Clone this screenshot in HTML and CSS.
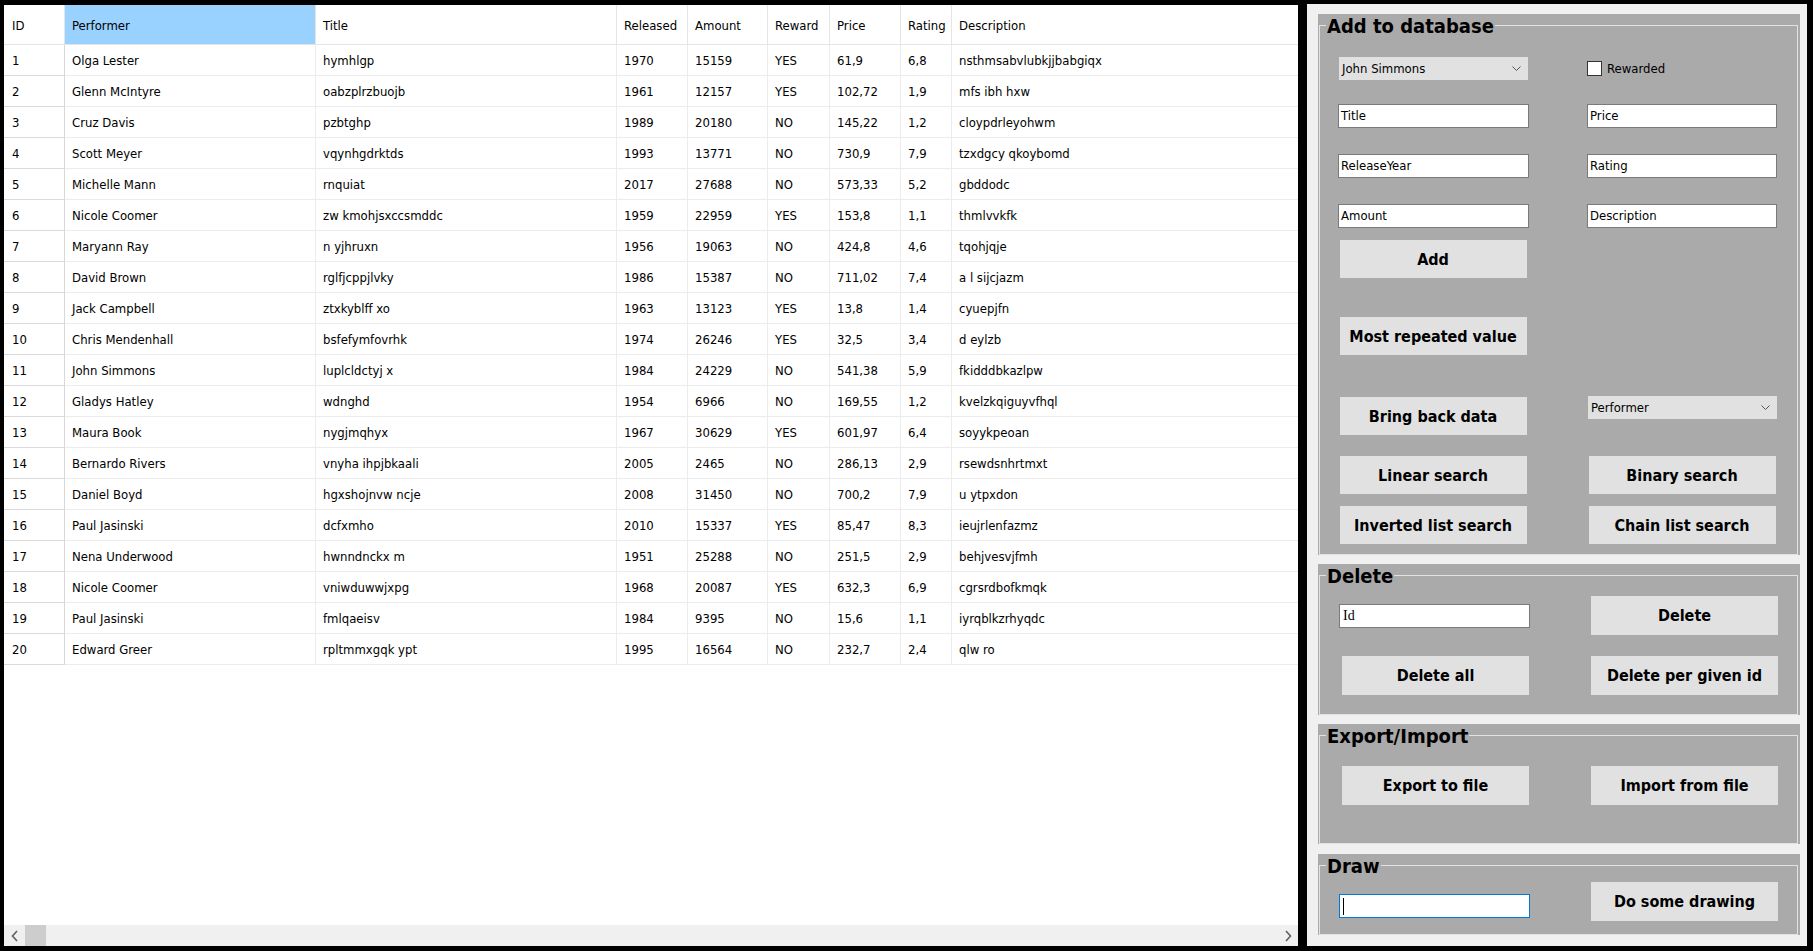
FILE: index.html
```html
<!DOCTYPE html>
<html lang="en">
<head>
<meta charset="utf-8">
<title>Database</title>
<link rel="stylesheet" href="styles.css">
</head>
<body>
<div class="window">
  <div class="table-pane">
    <div class="table-view">
      <table class="grid">
        <colgroup>
          <col class="c-id"><col class="c-perf"><col class="c-title"><col class="c-rel"><col class="c-amt"><col class="c-rew"><col class="c-price"><col class="c-rat"><col class="c-desc">
        </colgroup>
        <thead>
          <tr><th class="vh">ID</th><th class="sel">Performer</th><th>Title</th><th>Released</th><th>Amount</th><th>Reward</th><th>Price</th><th>Rating</th><th class="last">Description</th></tr>
        </thead>
        <tbody>
          <tr><th class="vh">1</th><td>Olga Lester</td><td>hymhlgp</td><td>1970</td><td>15159</td><td>YES</td><td>61,9</td><td>6,8</td><td>nsthmsabvlubkjjbabgiqx</td></tr>
          <tr><th class="vh">2</th><td>Glenn McIntyre</td><td>oabzplrzbuojb</td><td>1961</td><td>12157</td><td>YES</td><td>102,72</td><td>1,9</td><td>mfs ibh hxw</td></tr>
          <tr><th class="vh">3</th><td>Cruz Davis</td><td>pzbtghp</td><td>1989</td><td>20180</td><td>NO</td><td>145,22</td><td>1,2</td><td>cloypdrleyohwm</td></tr>
          <tr><th class="vh">4</th><td>Scott Meyer</td><td>vqynhgdrktds</td><td>1993</td><td>13771</td><td>NO</td><td>730,9</td><td>7,9</td><td>tzxdgcy qkoybomd</td></tr>
          <tr><th class="vh">5</th><td>Michelle Mann</td><td>rnquiat</td><td>2017</td><td>27688</td><td>NO</td><td>573,33</td><td>5,2</td><td>gbddodc</td></tr>
          <tr><th class="vh">6</th><td>Nicole Coomer</td><td>zw kmohjsxccsmddc</td><td>1959</td><td>22959</td><td>YES</td><td>153,8</td><td>1,1</td><td>thmlvvkfk</td></tr>
          <tr><th class="vh">7</th><td>Maryann Ray</td><td>n yjhruxn</td><td>1956</td><td>19063</td><td>NO</td><td>424,8</td><td>4,6</td><td>tqohjqje</td></tr>
          <tr><th class="vh">8</th><td>David Brown</td><td>rglfjcppjlvky</td><td>1986</td><td>15387</td><td>NO</td><td>711,02</td><td>7,4</td><td>a l sijcjazm</td></tr>
          <tr><th class="vh">9</th><td>Jack Campbell</td><td>ztxkyblff xo</td><td>1963</td><td>13123</td><td>YES</td><td>13,8</td><td>1,4</td><td>cyuepjfn</td></tr>
          <tr><th class="vh">10</th><td>Chris Mendenhall</td><td>bsfefymfovrhk</td><td>1974</td><td>26246</td><td>YES</td><td>32,5</td><td>3,4</td><td>d eylzb</td></tr>
          <tr><th class="vh">11</th><td>John Simmons</td><td>luplcldctyj x</td><td>1984</td><td>24229</td><td>NO</td><td>541,38</td><td>5,9</td><td>fkidddbkazlpw</td></tr>
          <tr><th class="vh">12</th><td>Gladys Hatley</td><td>wdnghd</td><td>1954</td><td>6966</td><td>NO</td><td>169,55</td><td>1,2</td><td>kvelzkqiguyvfhql</td></tr>
          <tr><th class="vh">13</th><td>Maura Book</td><td>nygjmqhyx</td><td>1967</td><td>30629</td><td>YES</td><td>601,97</td><td>6,4</td><td>soyykpeoan</td></tr>
          <tr><th class="vh">14</th><td>Bernardo Rivers</td><td>vnyha ihpjbkaali</td><td>2005</td><td>2465</td><td>NO</td><td>286,13</td><td>2,9</td><td>rsewdsnhrtmxt</td></tr>
          <tr><th class="vh">15</th><td>Daniel Boyd</td><td>hgxshojnvw ncje</td><td>2008</td><td>31450</td><td>NO</td><td>700,2</td><td>7,9</td><td>u ytpxdon</td></tr>
          <tr><th class="vh">16</th><td>Paul Jasinski</td><td>dcfxmho</td><td>2010</td><td>15337</td><td>YES</td><td>85,47</td><td>8,3</td><td>ieujrlenfazmz</td></tr>
          <tr><th class="vh">17</th><td>Nena Underwood</td><td>hwnndnckx m</td><td>1951</td><td>25288</td><td>NO</td><td>251,5</td><td>2,9</td><td>behjvesvjfmh</td></tr>
          <tr><th class="vh">18</th><td>Nicole Coomer</td><td>vniwduwwjxpg</td><td>1968</td><td>20087</td><td>YES</td><td>632,3</td><td>6,9</td><td>cgrsrdbofkmqk</td></tr>
          <tr><th class="vh">19</th><td>Paul Jasinski</td><td>fmlqaeisv</td><td>1984</td><td>9395</td><td>NO</td><td>15,6</td><td>1,1</td><td>iyrqblkzrhyqdc</td></tr>
          <tr><th class="vh">20</th><td>Edward Greer</td><td>rpltmmxgqk ypt</td><td>1995</td><td>16564</td><td>NO</td><td>232,7</td><td>2,4</td><td>qlw ro</td></tr>
        </tbody>
      </table>
    </div>
    <div class="hscroll">
      <div class="sb-btn"><svg width="8" height="12" viewBox="0 0 8 12"><polyline points="6,1 1.5,6 6,11" fill="none" stroke="#606060" stroke-width="1.6"/></svg></div>
      <div class="sb-thumb"></div>
      <div class="sb-track"></div>
      <div class="sb-btn"><svg width="8" height="12" viewBox="0 0 8 12"><polyline points="2,1 6.5,6 2,11" fill="none" stroke="#606060" stroke-width="1.6"/></svg></div>
    </div>
  </div>

  <div class="side">
    <div class="group g-add">
      <fieldset>
        <legend>Add to database</legend>
        <div class="frow mt21">
          <div class="combo c-left"><span>John Simmons</span><svg width="9" height="6" viewBox="0 0 9 6"><polyline points="0.5,0.5 4.5,4.5 8.5,0.5" fill="none" stroke="#555" stroke-width="1"/></svg></div>
          <label class="check"><span class="box"></span>Rewarded</label>
        </div>
        <div class="frow mt24">
          <div class="field">Title</div>
          <div class="field">Price</div>
        </div>
        <div class="frow mt26">
          <div class="field">ReleaseYear</div>
          <div class="field">Rating</div>
        </div>
        <div class="frow mt26">
          <div class="field">Amount</div>
          <div class="field">Description</div>
        </div>
        <div class="frow mt12">
          <button class="btn">Add</button>
        </div>
        <div class="frow mt39">
          <button class="btn">Most repeated value</button>
        </div>
        <div class="frow mt41 top">
          <button class="btn nudge">Bring back data</button>
          <div class="combo c-right"><span>Performer</span><svg width="9" height="6" viewBox="0 0 9 6"><polyline points="0.5,0.5 4.5,4.5 8.5,0.5" fill="none" stroke="#555" stroke-width="1"/></svg></div>
        </div>
        <div class="frow mt21">
          <button class="btn">Linear search</button>
          <button class="btn">Binary search</button>
        </div>
        <div class="frow mt12 last">
          <button class="btn">Inverted list search</button>
          <button class="btn">Chain list search</button>
        </div>
      </fieldset>
    </div>

    <div class="group g-delete">
      <fieldset>
        <legend>Delete</legend>
        <div class="drow mt10">
          <div class="field serif">Id</div>
          <button class="btn">Delete</button>
        </div>
        <div class="drow mt21 last">
          <button class="btn">Delete all</button>
          <button class="btn">Delete per given id</button>
        </div>
      </fieldset>
    </div>

    <div class="group g-export">
      <fieldset>
        <legend>Export/Import</legend>
        <div class="drow mt20 last">
          <button class="btn">Export to file</button>
          <button class="btn">Import from file</button>
        </div>
      </fieldset>
    </div>

    <div class="group g-draw">
      <fieldset>
        <legend>Draw</legend>
        <div class="drow mt6 last">
          <div class="field focused"><span class="caret"></span></div>
          <button class="btn">Do some drawing</button>
        </div>
      </fieldset>
    </div>
  </div>
</div>
</body>
</html>
```

FILE: styles.css
```css
html, body {
  margin: 0;
  padding: 0;
  background: #000;
}

body {
  width: 1813px;
  height: 951px;
  overflow: hidden;
  font-family: "DejaVu Sans Condensed", "DejaVu Sans", sans-serif;
  font-stretch: condensed;
  font-size: 13px;
  color: #000;
}

.window {
  display: flex;
  align-items: flex-start;
  height: 951px;
}

/* ---------- table side ---------- */
.table-pane {
  margin: 5px 0 0 4px;
  width: 1294px;
  height: 941px;
  background: #fff;
  display: flex;
  flex-direction: column;
}

.table-view {
  flex: 1;
  overflow: hidden;
}

.grid {
  border-collapse: separate;
  border-spacing: 0;
  table-layout: fixed;
  width: 1294px;
}

.c-id { width: 61px; }
.c-perf { width: 251px; }
.c-title { width: 301px; }
.c-rel { width: 71px; }
.c-amt { width: 80px; }
.c-rew { width: 62px; }
.c-price { width: 71px; }
.c-rat { width: 51px; }
.c-desc { width: 346px; }

.grid th,
.grid td {
  box-sizing: border-box;
  padding: 0 0 0 7px;
  text-align: left;
  font-weight: normal;
  white-space: nowrap;
  overflow: hidden;
}

.grid thead th {
  height: 40px;
  padding-top: 2px;
  border-bottom: 1px solid #e5e5e5;
  border-right: 1px solid #e5e5e5;
  background: #fff;
}

.grid thead th.last {
  border-right: none;
}

.grid thead th.sel {
  background: #99d1ff;
}

.grid tbody td {
  height: 31px;
  border-bottom: 1px solid #ececec;
  border-right: 1px solid #ececec;
}

.grid th.vh {
  padding-left: 8px;
}

.grid tbody th.vh {
  height: 31px;
  border-bottom: 1px solid #dadada;
  border-right: 1px solid #d8d8d8;
}

.grid tbody td:last-child {
  border-right: none;
}

.hscroll {
  height: 21px;
  background: #f0f0f0;
  display: flex;
}

.sb-btn {
  width: 21px;
  height: 21px;
  display: flex;
  align-items: center;
  justify-content: center;
}

.sb-thumb {
  width: 21px;
  height: 21px;
  background: #cdcdcd;
}

.sb-track {
  flex: 1;
}

/* ---------- right side ---------- */
.side {
  margin: 4px 0 0 9px;
  width: 500px;
  height: 942px;
  box-sizing: border-box;
  padding: 10px 7px 10px 11px;
  background: #f0f0f0;
  display: flex;
  flex-direction: column;
}

.group {
  background: #aaaaaa;
}

.g-delete, .g-export { margin-top: 9px; }
.g-draw { margin-top: 10px; }

fieldset {
  margin: 0 2px 0 1px;
  padding: 0;
  border: 1px solid #e2e2e2;
  min-width: 0;
}

legend {
  margin-left: 6px;
  padding: 0 1px;
  height: 22px;
  line-height: 24px;
  font-size: 20px;
  font-weight: bold;
  color: #000;
}

.frow {
  display: grid;
  grid-template-columns: 190px 190px;
  column-gap: 59px;
  align-items: center;
  padding-left: 18px;
}

.frow.top { align-items: start; }

.drow {
  display: grid;
  grid-template-columns: 190px 187px;
  column-gap: 62px;
  align-items: center;
  padding-left: 19px;
}

.mt6 { margin-top: 6px; }
.mt10 { margin-top: 10px; }
.mt12 { margin-top: 12px; }
.mt20 { margin-top: 20px; }
.mt21 { margin-top: 21px; }
.mt24 { margin-top: 24px; }
.mt26 { margin-top: 26px; }
.mt39 { margin-top: 39px; }
.mt41 { margin-top: 41px; }

.g-add .last { margin-bottom: 10px; }
.g-delete .last { margin-bottom: 19px; }
.g-export .last { margin-bottom: 38px; }
.g-draw .last { margin-bottom: 13px; }

.field {
  box-sizing: border-box;
  height: 24px;
  width: 191px;
  background: #fff;
  border: 1px solid #7a7a7a;
  padding-left: 2px;
  line-height: 22px;
  font-size: 13px;
}

.frow .field:nth-child(2) { width: 190px; }

.field.serif {
  font-family: "Liberation Serif", serif;
  font-stretch: normal;
  font-size: 14px;
  padding-left: 3px;
}

.field.focused {
  border-color: #0078d7;
  align-self: end;
  margin-bottom: 3px;
  display: flex;
  align-items: center;
  padding-left: 3px;
}

.caret {
  width: 1px;
  height: 17px;
  background: #000;
}

.btn {
  box-sizing: border-box;
  width: 187px;
  height: 38px;
  border: none;
  padding: 0;
  background: #e1e1e1;
  font-family: "DejaVu Sans Condensed", "DejaVu Sans", sans-serif;
  font-stretch: condensed;
  font-weight: bold;
  font-size: 16px;
  color: #000;
  justify-self: center;
}

.drow .btn { height: 39px; }
.drow .btn:first-child { justify-self: end; }

.btn.nudge { margin-top: 1px; }

.combo {
  box-sizing: border-box;
  height: 23px;
  width: 189px;
  background: #e1e1e1;
  display: flex;
  align-items: center;
  justify-content: space-between;
  padding: 0 7px 0 3px;
  font-size: 13px;
}

.combo.c-left { justify-self: end; }
.combo.c-right { justify-self: end; }

.check {
  display: flex;
  align-items: center;
  gap: 5px;
  font-size: 13px;
}

.check .box {
  box-sizing: border-box;
  width: 15px;
  height: 15px;
  background: #fff;
  border: 1px solid #333;
}
```
